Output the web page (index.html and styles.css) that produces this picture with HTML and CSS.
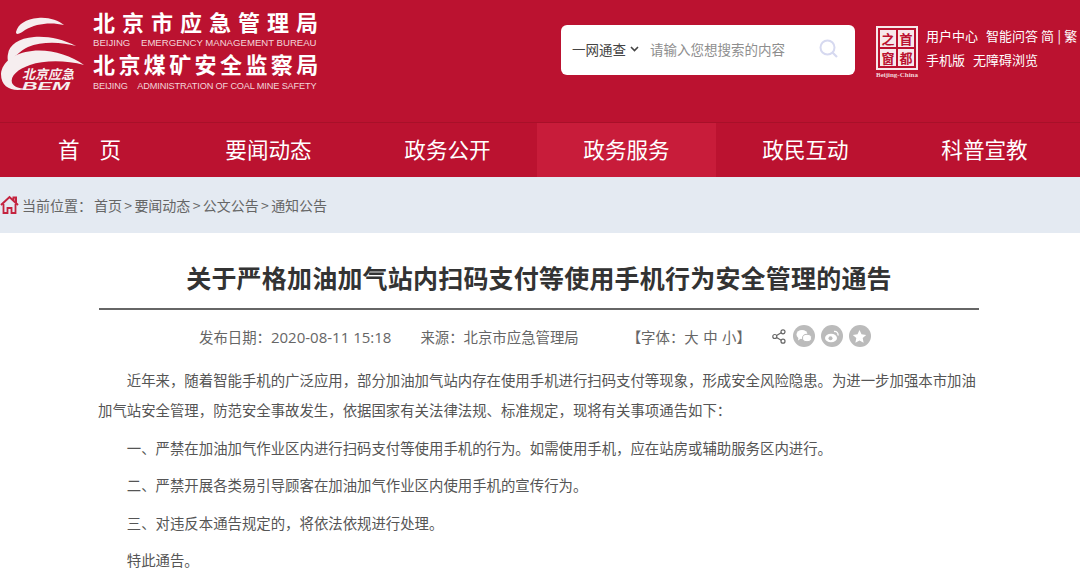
FILE: index.html
```html
<!DOCTYPE html>
<html lang="zh-CN">
<head>
    <meta charset="UTF-8">
    <meta name="viewport" content="width=device-width, initial-scale=1.0">
    <title>关于严格加油加气站内扫码支付等使用手机行为安全管理的通告</title>
    <link rel="stylesheet" href="styles.css">
</head>
<body>
    <header class="header">
        <div class="brand">
            <svg class="brand-logo" width="86" height="92" viewBox="0 0 86 92">
                <path fill="#f6eeef" d="M16 32C18 24 26 19 38 18 48 17 58 20 64 25 52 22 36 23 25 30 21 33 16 36 16 32Z"/>
                <path fill="#f6eeef" d="M8 54C9 45 19 38 34 37 48 36 62 39 76 46 62 42 42 41 28 47 20 51 14 57 10 62 8 64 7 58 8 54Z"/>
                <path fill="#f6eeef" d="M1 74C2 62 14 53 32 51 50 49 70 55 84 65 66 60 44 60 30 65 18 69 10 76 12 83 14 87 19 88 25 89 13 92 1 88 1 74Z"/>
                <text class="brand-mark" x="22" y="79">北京应急</text>
                <text class="brand-mark brand-mark-en" x="22" y="90" textLength="48" lengthAdjust="spacingAndGlyphs">BEM</text>
            </svg>
            <div class="brand-names">
                <div class="brand-cn">北京市应急管理局</div>
                <div class="brand-en">BEIJING&nbsp;&nbsp;&nbsp;&nbsp;EMERGENCY MANAGEMENT BUREAU</div>
                <div class="brand-cn brand-cn-long">北京煤矿安全监察局</div>
                <div class="brand-en brand-en-long">BEIJING&nbsp;&nbsp;&nbsp;&nbsp;ADMINISTRATION OF COAL MINE SAFETY</div>
            </div>
        </div>
        <div class="search">
            <span class="search-scope">一网通查
                <svg width="9" height="6" viewBox="0 0 9 6"><path d="M1 1l3.500 3.500L8 1" fill="none" stroke="#444" stroke-width="1.600"/></svg>
            </span>
            <span class="search-hint">请输入您想搜索的内容</span>
            <svg class="search-icon" width="20" height="20" viewBox="0 0 20 20">
                <circle cx="8.500" cy="8.500" r="7" fill="none" stroke="#d6d9f0" stroke-width="2"/>
                <path d="M13.500 13.500L18 18" stroke="#d6d9f0" stroke-width="2.200"/>
            </svg>
        </div>
        <div class="seal">
            <div class="seal-grid">
                <span>之</span><span>首</span><span>窗</span><span>都</span>
            </div>
            <div class="seal-label">Beijing-China</div>
        </div>
        <div class="quick-links">
            <div class="quick-row"><span>用户中心</span><span>智能问答</span><span class="lang">简 | 繁</span></div>
            <div class="quick-row"><span>手机版</span><span>无障碍浏览</span></div>
        </div>
    </header>

    <nav class="nav">
        <a class="nav-item nav-item-wide">首页</a>
        <a class="nav-item">要闻动态</a>
        <a class="nav-item">政务公开</a>
        <a class="nav-item active">政务服务</a>
        <a class="nav-item">政民互动</a>
        <a class="nav-item">科普宣教</a>
    </nav>

    <div class="crumbs">
        <svg width="19" height="19" viewBox="0 0 19 19">
            <path d="M1 10L9.500 2 18 10M13.500 5.500V2.500h2.500v5" fill="none" stroke="#c4233f" stroke-width="2"/>
            <path d="M3.500 9v9h4v-5h4v5h4V9" fill="none" stroke="#c4233f" stroke-width="1.800"/>
        </svg>
        <span class="crumbs-label">当前位置&#xFF1A;</span>
        <span>首页<b class="sep">&gt;</b>要闻动态<b class="sep">&gt;</b>公文公告<b class="sep">&gt;</b>通知公告</span>
    </div>

    <main class="article">
        <h1 class="title">关于严格加油加气站内扫码支付等使用手机行为安全管理的通告</h1>
        <div class="meta">
            <span>发布日期&#xFF1A;<span class="meta-num">2020-08-11 15:18</span></span>
            <span class="meta-source">来源&#xFF1A;北京市应急管理局</span>
            <span class="meta-font">【字体&#xFF1A;<i>大</i><i>中</i><i>小</i>】</span>
            <svg class="share" width="14" height="15" viewBox="0 0 14 15">
                <g fill="none" stroke="#666" stroke-width="1.200">
                    <circle cx="2.800" cy="7.500" r="2"/>
                    <circle cx="11" cy="2.800" r="2"/>
                    <circle cx="11" cy="12.200" r="2"/>
                    <path d="M4.600 6.500L9.200 3.800M4.600 8.500l4.600 2.700"/>
                </g>
            </svg>
            <span class="share-btn">
                <svg width="16" height="14" viewBox="0 0 16 14">
                    <ellipse cx="6" cy="5.500" rx="5.500" ry="4.500" fill="#fff"/>
                    <path d="M2.500 8.500L2 11.500 5 9.500Z" fill="#fff"/>
                    <ellipse cx="11" cy="9" rx="4.500" ry="3.700" fill="#fff" stroke="#bbb"/>
                </svg>
            </span>
            <span class="share-btn">
                <svg width="16" height="14" viewBox="0 0 16 14">
                    <ellipse cx="7" cy="9" rx="6" ry="4.300" fill="#fff"/>
                    <circle cx="6.500" cy="9.300" r="2" fill="#bbb"/>
                    <path d="M10 2.500c2.500-.5 4.500 1.500 4 4" fill="none" stroke="#fff" stroke-width="1.400"/>
                </svg>
            </span>
            <span class="share-btn">
                <svg width="15" height="15" viewBox="0 0 15 15">
                    <path d="M7.500 1l2 4.300 4.700.6-3.500 3.200.9 4.700-4.100-2.300-4.100 2.300.9-4.700L.8 5.900l4.700-.6Z" fill="#fff"/>
                </svg>
            </span>
        </div>
        <div class="content">
            <p>近年来&#xFF0C;随着智能手机的广泛应用&#xFF0C;部分加油加气站内存在使用手机进行扫码支付等现象&#xFF0C;形成安全风险隐患。为进一步加强本市加油加气站安全管理&#xFF0C;防范安全事故发生&#xFF0C;依据国家有关法律法规、标准规定&#xFF0C;现将有关事项通告如下&#xFF1A;</p>
            <p>一、严禁在加油加气作业区内进行扫码支付等使用手机的行为。如需使用手机&#xFF0C;应在站房或辅助服务区内进行。</p>
            <p>二、严禁开展各类易引导顾客在加油加气作业区内使用手机的宣传行为。</p>
            <p>三、对违反本通告规定的&#xFF0C;将依法依规进行处理。</p>
            <p>特此通告。</p>
        </div>
    </main>
</body>
</html>
```

FILE: styles.css
```css
html, body {
    height: 580px;
    overflow: hidden;
}

body {
    margin: 0;
    font-family: "Noto Sans CJK SC", "Noto Sans", sans-serif;
    background: #fff;
    color: #555;
}

.header {
    display: flex;
    height: 122px;
    background: #bb1230;
    color: #fff;
    border-bottom: 1px solid #a81029;
}

.brand {
    display: flex;
    width: 561px;
}

.brand-logo {
    flex: none;
}

.brand-mark {
    font-size: 13px;
    font-weight: 700;
    font-style: italic;
    fill: #f6eeef;
}

.brand-mark-en {
    font-family: "Liberation Sans", sans-serif;
    font-size: 10px;
}

.brand-names {
    margin: 9px 0 0 7px;
    width: 226px;
}

.brand-cn {
    font-size: 22px;
    font-weight: 700;
    line-height: 24px;
    letter-spacing: 7px;
    white-space: nowrap;
}

.brand-cn-long {
    margin-top: 3px;
    letter-spacing: 3.400px;
}

.brand-en {
    margin-top: 4px;
    font-family: "Liberation Sans", sans-serif;
    font-size: 9.600px;
    line-height: 11px;
    white-space: nowrap;
    color: #f3d5da;
}

.brand-en-long {
    margin-top: 6px;
    font-size: 9.200px;
    letter-spacing: -0.150px;
}

.search {
    display: flex;
    align-items: center;
    flex: none;
    box-sizing: border-box;
    width: 294px;
    height: 50px;
    margin-top: 25px;
    padding: 0 16px 2px 11px;
    background: #fff;
    border-radius: 6px;
    font-size: 13.500px;
}

.search-scope {
    display: flex;
    align-items: center;
    gap: 4px;
    width: 78px;
    color: #444;
    white-space: nowrap;
}

.search-hint {
    flex: 1;
    color: #8e8e8e;
    white-space: nowrap;
}

.search-icon {
    flex: none;
}

.seal {
    flex: none;
    width: 48px;
    margin: 26px 0 0 18px;
}

.seal-grid {
    display: grid;
    grid-template-columns: 1fr 1fr;
    gap: 2px;
    box-sizing: border-box;
    width: 42px;
    height: 44px;
    margin-left: 3px;
    padding: 2px;
    background: #bb1230;
    border: 2px solid #f7e9eb;
}

.seal-grid span {
    display: flex;
    align-items: center;
    justify-content: center;
    background: #f7e9eb;
    color: #bb1230;
    font-size: 13px;
    font-weight: 700;
    line-height: 1;
}

.seal-label {
    margin-top: 1px;
    font-family: "Liberation Serif", serif;
    font-size: 7px;
    font-weight: 700;
    line-height: 8px;
    text-align: center;
    white-space: nowrap;
    color: #f3d5da;
}

.quick-links {
    flex: none;
    margin: 24px 0 0 5px;
    font-size: 13px;
    line-height: 24px;
}

.quick-row {
    display: flex;
    gap: 8px;
    white-space: nowrap;
}

.lang {
    margin-left: -5px;
    word-spacing: 0.500px;
}

.nav {
    display: flex;
    height: 54px;
    background: #bb1230;
}

.nav-item {
    width: 179px;
    color: #fff;
    font-size: 21.600px;
    line-height: 52px;
    text-align: center;
    white-space: nowrap;
}

.nav-item-wide {
    letter-spacing: 20px;
    text-indent: 20px;
}

.nav-item.active {
    background: #c81c3a;
}

.crumbs {
    display: flex;
    align-items: center;
    box-sizing: border-box;
    height: 56px;
    padding-bottom: 1px;
    font-size: 14px;
    color: #666;
    background: #e4eaf2;
}

.crumbs svg {
    flex: none;
    margin-right: 3px;
}

.crumbs-label {
    width: 72px;
}

.sep {
    padding: 0 2.300px;
    font-weight: 400;
}

.article {
    width: 880px;
    margin-left: 99px;
}

.title {
    margin: 0;
    padding: 24px 0 11px;
    font-size: 25px;
    font-weight: 700;
    line-height: 40px;
    letter-spacing: 0.200px;
    text-align: center;
    color: #333;
    white-space: nowrap;
    border-bottom: 2px solid #666;
}

.meta {
    display: flex;
    align-items: center;
    height: 52px;
    padding-left: 100px;
    font-size: 14.400px;
    color: #666;
    white-space: nowrap;
}

.meta-num {
    font-family: "Open Sans", sans-serif;
    font-size: 15px;
}

.meta-source {
    margin-left: 29px;
}

.meta-font {
    margin-left: 48px;
}

.meta-font i {
    margin-right: 4.500px;
    font-style: normal;
}

.meta-font i:last-child {
    margin-right: 0;
}

.share {
    flex: none;
    margin-left: 21px;
}

.share-btn {
    display: flex;
    align-items: center;
    justify-content: center;
    flex: none;
    width: 22px;
    height: 22px;
    margin-left: 6px;
    border-radius: 50%;
    background: #bbb;
}

.meta .share + .share-btn {
    margin-left: 7px;
}

.content {
    margin: 3px 0 0 -1px;
    font-size: 14.400px;
    line-height: 30px;
    color: #555;
}

.content p {
    margin: 0 0 7.500px;
    text-indent: 2em;
}
```
